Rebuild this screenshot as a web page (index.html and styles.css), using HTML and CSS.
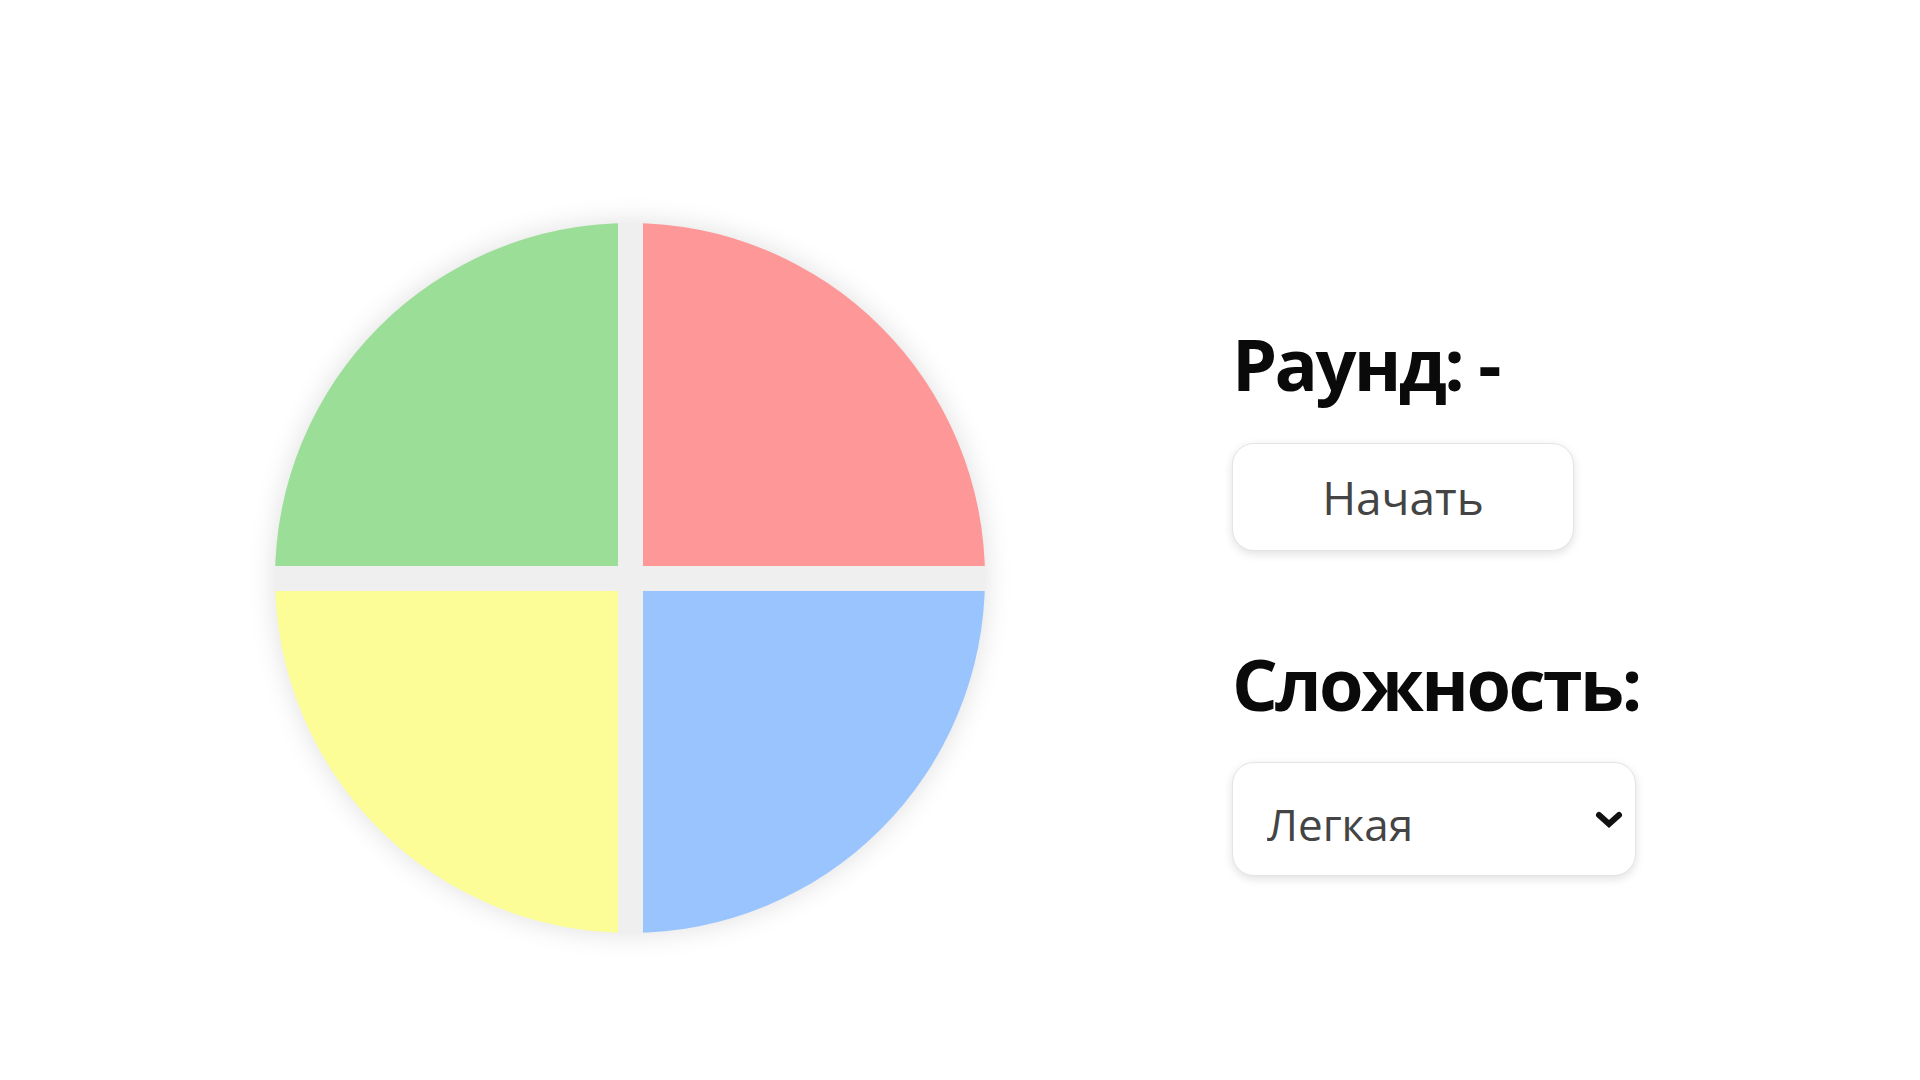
FILE: index.html
```html
<!DOCTYPE html>
<html lang="ru">
<head>
<meta charset="utf-8">
<title>Simon</title>
<link rel="stylesheet" href="styles.css">
</head>
<body>
<main class="app">
  <div class="board">
    <div class="sector green"></div>
    <div class="sector red"></div>
    <div class="sector yellow"></div>
    <div class="sector blue"></div>
  </div>
  <section class="controls">
    <h2 class="title">Раунд: -</h2>
    <button class="start">Начать</button>
    <h2 class="title title-diff">Сложность:</h2>
    <div class="select-wrap">
      <select class="select">
        <option>Легкая</option>
        <option>Средняя</option>
        <option>Сложная</option>
      </select>
      <svg class="chevron" viewBox="0 0 30 20" width="30" height="20" aria-hidden="true">
        <path d="M5 5 L15 14 L25 5" fill="none" stroke="#111" stroke-width="6" stroke-linecap="round" stroke-linejoin="miter"/>
      </svg>
    </div>
  </section>
</main>
</body>
</html>
```

FILE: styles.css
```css
html, body {
  margin: 0;
  padding: 0;
  background: #ffffff;
}

body {
  font-family: "Open Sans", "Noto Sans", sans-serif;
  width: 1920px;
  height: 1080px;
  overflow: hidden;
}

.app {
  display: flex;
  align-items: flex-start;
  gap: 247px;
  padding: 223px 0 0 275px;
}

.board {
  flex: none;
  width: 710px;
  height: 710px;
  border-radius: 50%;
  overflow: hidden;
  background: #efefef;
  display: grid;
  grid-template-columns: 1fr 1fr;
  grid-template-rows: 1fr 1fr;
  gap: 25px;
  box-shadow: 0 0 28px rgba(0, 0, 0, 0.13);
}

.green { background: #9ade98; }
.red { background: #fe9797; }
.yellow { background: #fdfd97; }
.blue { background: #99c4fd; }

.controls {
  display: flex;
  flex-direction: column;
  align-items: flex-start;
  margin-top: 104px;
}

.title {
  margin: 0;
  font-size: 72px;
  line-height: 1;
  font-weight: 700;
  color: #0a0a0a;
  letter-spacing: -2.6px;
}

.start {
  margin-top: 44px;
  width: 342px;
  height: 108px;
  border: 1px solid #e4e4e4;
  border-radius: 22px;
  background: #ffffff;
  box-shadow: 0 3px 10px rgba(0, 0, 0, 0.12);
  font-family: inherit;
  font-size: 46px;
  color: #444444;
  padding: 0;
}

.title-diff {
  margin-top: 96px;
}

.select-wrap {
  position: relative;
  margin-top: 43px;
}

.select {
  appearance: none;
  -webkit-appearance: none;
  width: 404px;
  height: 114px;
  border: 1px solid #e4e4e4;
  border-radius: 22px;
  background: #ffffff;
  box-shadow: 0 3px 10px rgba(0, 0, 0, 0.12);
  font-family: inherit;
  font-size: 44px;
  color: #444444;
  padding: 10px 0 0 34px;
}

.chevron {
  position: absolute;
  left: 362px;
  top: 48px;
  pointer-events: none;
}
```
